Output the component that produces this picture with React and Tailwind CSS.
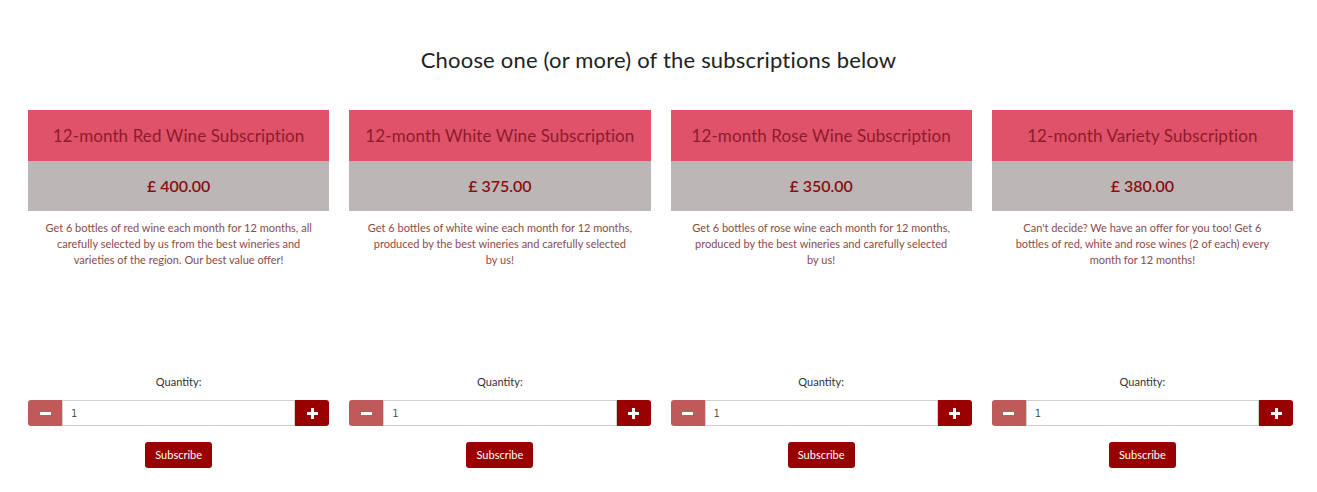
import { useState } from 'react';

const plans = [
  {
    title: '12-month Red Wine Subscription',
    price: '£ 400.00',
    text: 'Get 6 bottles of red wine each month for 12 months, all carefully selected by us from the best wineries and varieties of the region. Our best value offer!',
  },
  {
    title: '12-month White Wine Subscription',
    price: '£ 375.00',
    text: 'Get 6 bottles of white wine each month for 12 months, produced by the best wineries and carefully selected by\u00a0us!',
  },
  {
    title: '12-month Rose Wine Subscription',
    price: '£ 350.00',
    text: 'Get 6 bottles of rose wine each month for 12 months, produced by the best wineries and carefully selected by\u00a0us!',
  },
  {
    title: '12-month Variety Subscription',
    price: '£ 380.00',
    text: "Can't decide? We have an offer for you too! Get 6 bottles of red, white and rose wines (2 of each) every month for 12 months!",
  },
];

function PlanCard({ plan }) {
  const [qty, setQty] = useState(1);

  return (
    <div className="flex flex-col">
      <div className="h-[51px] flex items-center justify-center bg-[#e0526a] text-[17px] tracking-[0.1px] text-[#8e1b2b]">
        {plan.title}
      </div>
      <div className="h-[50px] flex items-center justify-center bg-[#bcb6b6] text-[16px] font-semibold text-[#8b0e0e]">
        {plan.price}
      </div>
      <p className="h-[161px] px-[15px] pt-[9px] text-center text-[11px] leading-[16px] text-[#8d4a4a]">
        {plan.text}
      </p>
      <div className="text-center text-[11px] leading-[20px] text-[#333]">Quantity:</div>
      <div className="mt-[8px] flex h-[26px]">
        <button
          onClick={() => setQty(Math.max(1, qty - 1))}
          className="w-[34px] flex items-center justify-center bg-[#c05a5a] rounded-l-[3px] text-white"
        >
          <span className="block w-[11px] h-[3px] bg-white" />
        </button>
        <input
          type="text"
          value={qty}
          onChange={(e) => setQty(e.target.value)}
          className="flex-1 min-w-0 border border-[#d0d0d0] px-[8px] text-[10px] text-[#555] font-['DejaVu_Sans_Mono',monospace] outline-none"
        />
        <button
          onClick={() => setQty(Number(qty) + 1)}
          className="w-[34px] relative flex items-center justify-center bg-[#990000] rounded-r-[3px]"
        >
          <span className="absolute w-[11px] h-[3px] bg-white" />
          <span className="absolute w-[3px] h-[11px] bg-white" />
        </button>
      </div>
      <div className="mt-[16px] flex justify-center">
        <button className="h-[26px] px-[10px] rounded-[3px] bg-[#990000] text-[11px] text-white">
          Subscribe
        </button>
      </div>
    </div>
  );
}

export default function App() {
  return (
    <div className="h-[492px] bg-white font-['Lato',sans-serif]">
      <h2 className="pt-[45px] mb-[35px] text-center text-[22px] tracking-[0.2px] leading-[30px] text-[#222]">
        Choose one (or more) of the subscriptions below
      </h2>
      <div className="grid grid-cols-4 gap-5 pl-[28px] pr-[24px]">
        {plans.map((p) => (
          <PlanCard key={p.title} plan={p} />
        ))}
      </div>
    </div>
  );
}
